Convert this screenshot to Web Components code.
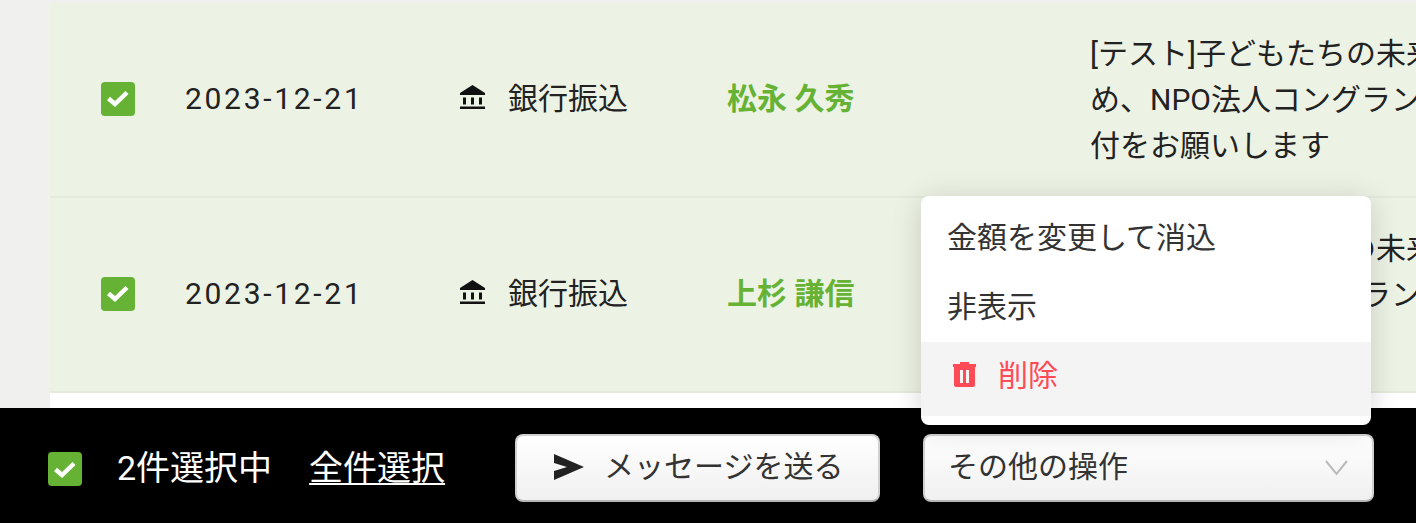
<!DOCTYPE html>
<html lang="ja">
<head>
<meta charset="utf-8">
<title>入金一覧</title>
<style>
  html, body { margin: 0; padding: 0; height: 100%; overflow: hidden; }
  body { font-family: Roboto, "Noto Sans CJK JP", sans-serif; color: #222; }
</style>
</head>
<body>
<template id="check-tpl">
  <style>
    :host { display: inline-flex; width: 34px; height: 34px; align-items: center; justify-content: center; background: #65b234; border-radius: 4px; }
    svg { display: block; }
  </style>
  <svg width="22" height="17" viewBox="0 0 22 17"><path d="M1.500 8.500 L8 14 L20 2.500" fill="none" stroke="#fff" stroke-width="4.500"/></svg>
</template>

<template id="row-tpl">
  <style>
    :host { display: grid; grid-template-columns: 84px 274px 268px 363px 1fr; align-items: center; height: 195px; box-sizing: border-box; padding: 0 0 2px 51px; background: #ecf2e4; border-bottom: 2px solid #e4ebdb; font-size: 30px; }
    .date { letter-spacing: 2.7px; }
    .method { display: flex; align-items: center; gap: 22px; }
    .method svg { display: block; margin-bottom: 2px; }
    .method span, .name { margin-bottom: 6px; }
    .name { color: #65b234; font-weight: 700; }
    .msg { line-height: 46px; white-space: nowrap; margin-top: 2px; }
  </style>
  <check-box></check-box>
  <div class="date"></div>
  <div class="method">
    <svg width="27" height="25" viewBox="0 0 27 25"><path d="M13.500 0 L26 8 V10 H1 V8Z M4 12.500h3v7H4Z M12 12.500h3v7h-3Z M20 12.500h3v7h-3Z M1 21.500h25V24H1Z" fill="#111"/></svg>
    <span></span>
  </div>
  <div class="name"></div>
  <div class="msg"><slot></slot></div>
</template>

<template id="button-tpl">
  <style>
    :host { display: flex; align-items: center; box-sizing: border-box; height: 68px; border-radius: 8px; border: 2px solid #d0d0d0; border-bottom-color: #b5b5b5; background: linear-gradient(#fff, #f0f0f0); font-size: 30px; color: #333; }
  </style>
  <slot></slot>
</template>

<template id="menu-tpl">
  <style>
    :host { position: absolute; left: 921px; top: 196px; width: 450px; height: 229px; box-sizing: border-box; padding-top: 8px; background: #fff; border-radius: 8px; box-shadow: 0 4px 30px rgba(0,0,0,.16); font-size: 30px; color: #333; }
  </style>
  <slot></slot>
</template>

<template id="item-tpl">
  <style>
    :host { display: flex; align-items: center; gap: 22px; box-sizing: border-box; height: 69px; padding: 0 0 8px 26px; }
    :host([danger]) { height: 74px; background: #f4f4f4; color: #ff4b55; padding: 0 0 12px 32px; }
    ::slotted(svg) { display: block; margin-top: 3px; }
  </style>
  <slot></slot>
</template>

<template id="bar-tpl">
  <style>
    :host { display: flex; align-items: center; box-sizing: border-box; height: 115px; padding: 5px 0 0 48px; background: #000; color: #fff; font-size: 34px; }
    check-box { margin-top: 2px; }
    .count { margin: 0 0 6px 35px; }
    .all { margin: 0 0 6px 37px; text-decoration: underline; text-underline-offset: 3px; text-decoration-thickness: 2px; }
    .send { margin-left: 70px; width: 365px; padding-left: 37px; gap: 20px; }
    .more { margin-left: 43px; width: 451px; padding: 0 24px 0 23px; justify-content: space-between; }
    bar-button span { margin-bottom: 8px; }
    .send svg { margin-bottom: 2px; }
    svg { display: block; }
  </style>
  <check-box></check-box>
  <span class="count">2件選択中</span>
  <span class="all">全件選択</span>
  <bar-button class="send">
    <svg width="30" height="26" viewBox="0 0 30 26"><path d="M0 0 L30 13 L0 26 V17 L13 13 L0 9Z" fill="#222"/></svg>
    <span>メッセージを送る</span>
  </bar-button>
  <bar-button class="more">
    <span>その他の操作</span>
    <svg width="23" height="16" viewBox="0 0 23 16"><path d="M1 1 L11.500 14 L22 1" fill="none" stroke="#bbb" stroke-width="2"/></svg>
  </bar-button>
</template>

<template id="page-tpl">
  <style>
    :host { display: flex; flex-direction: column; position: relative; width: 1416px; height: 523px; overflow: hidden; background: #f0f0ee; }
    .list { height: 408px; box-sizing: border-box; padding: 3px 0 0 50px; overflow: hidden; }
    .sheet { height: 100%; background: #fff; }
  </style>
  <div class="list"><div class="sheet"><slot name="rows"></slot></div></div>
  <action-bar></action-bar>
  <slot name="menu"></slot>
</template>

<app-page>
  <payment-row slot="rows" date="2023-12-21" method="銀行振込" name="松永 久秀">[テスト]子どもたちの未来のた<br>め、NPO法人コングランへの寄<br>付をお願いします</payment-row>
  <payment-row slot="rows" date="2023-12-21" method="銀行振込" name="上杉 謙信">[テスト]子どもたちの未来のた<br>め、NPO法人コングランへの寄<br>付をお願いします</payment-row>
  <action-menu slot="menu">
    <menu-row>金額を変更して消込</menu-row>
    <menu-row>非表示</menu-row>
    <menu-row danger>
      <svg width="23" height="25" viewBox="0 0 23 25"><path d="M7 0h9v2h7v3h-1V23a2 2 0 0 1-2 2H3a2 2 0 0 1-2-2V5H0V2h7Z M7 8v13h3V8Z M13 8v13h3V8Z" fill="#ff4b55" fill-rule="evenodd"/></svg>
      <span>削除</span>
    </menu-row>
  </action-menu>
</app-page>

<script>
  // every element just stamps its template into an open shadow root
  class Stamped extends HTMLElement {
    constructor() {
      super();
      this.attachShadow({ mode: "open" });
      const tpl = document.getElementById(this.constructor.tpl);
      this.shadowRoot.appendChild(tpl.content.cloneNode(true));
    }
  }
  class CheckBox extends Stamped { static get tpl() { return "check-tpl"; } }
  class BarButton extends Stamped { static get tpl() { return "button-tpl"; } }
  class ActionMenu extends Stamped { static get tpl() { return "menu-tpl"; } }
  class MenuRow extends Stamped { static get tpl() { return "item-tpl"; } }
  class ActionBar extends Stamped { static get tpl() { return "bar-tpl"; } }
  class AppPage extends Stamped { static get tpl() { return "page-tpl"; } }
  class PaymentRow extends Stamped {
    static get tpl() { return "row-tpl"; }
    connectedCallback() {
      this.shadowRoot.querySelector(".date").textContent = this.getAttribute("date");
      this.shadowRoot.querySelector(".method span").textContent = this.getAttribute("method");
      this.shadowRoot.querySelector(".name").textContent = this.getAttribute("name");
    }
  }
  customElements.define("check-box", CheckBox);
  customElements.define("bar-button", BarButton);
  customElements.define("action-menu", ActionMenu);
  customElements.define("menu-row", MenuRow);
  customElements.define("action-bar", ActionBar);
  customElements.define("payment-row", PaymentRow);
  customElements.define("app-page", AppPage);
</script>
</body>
</html>
